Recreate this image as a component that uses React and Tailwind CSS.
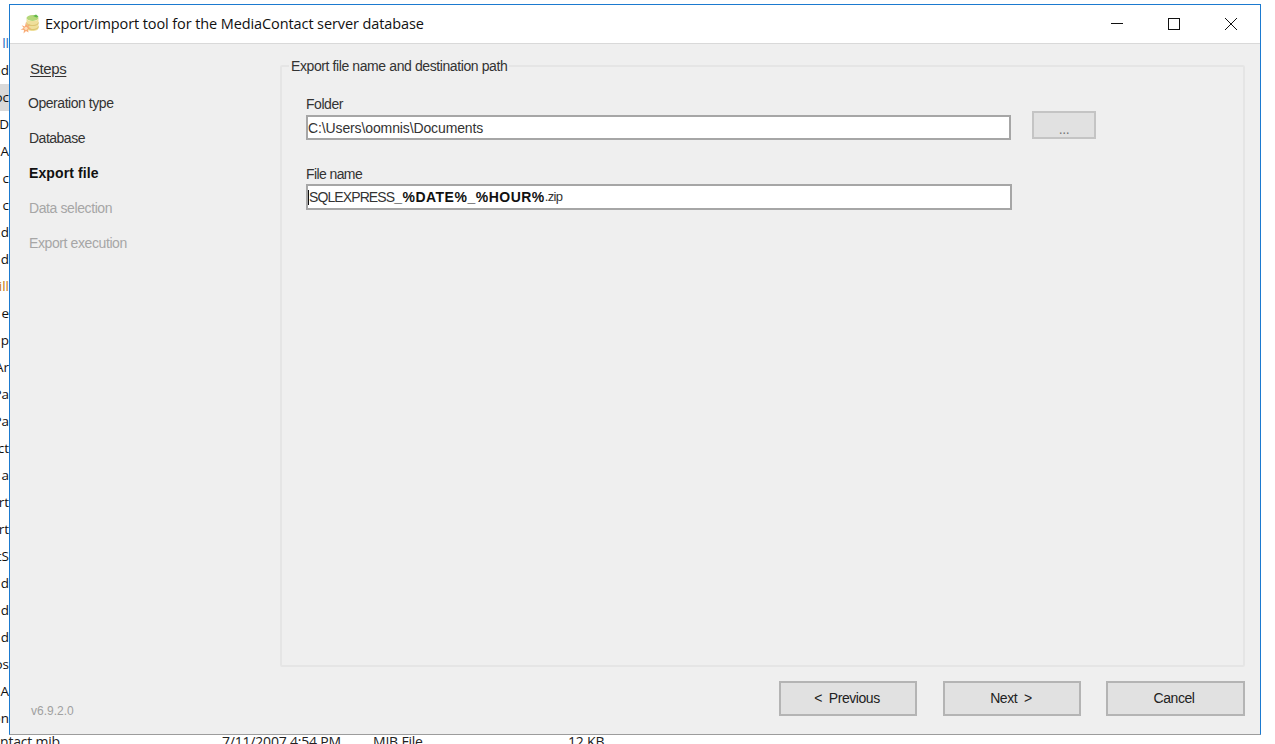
const rows = [
  ["ll", "text-[#1a6fc4]", ""],
  ["nd", "text-[#111]", ""],
  ["oc", "text-[#111]", "bg-[#d9d9d9]"],
  ["AD", "text-[#111]", ""],
  ["IA", "text-[#111]", ""],
  ["c", "text-[#111]", ""],
  ["c", "text-[#111]", ""],
  [".d", "text-[#111]", ""],
  ["d", "text-[#111]", ""],
  ["ill", "text-[#c87a10]", ""],
  ["e", "text-[#111]", ""],
  ["p", "text-[#111]", ""],
  ["Ar", "text-[#111]", ""],
  ["Pa", "text-[#111]", ""],
  ["Pa", "text-[#111]", ""],
  ["ct", "text-[#111]", ""],
  ["a", "text-[#111]", ""],
  ["rt", "text-[#111]", ""],
  ["rt", "text-[#111]", ""],
  ["tS", "text-[#111]", ""],
  ["d", "text-[#111]", ""],
  ["d", "text-[#111]", ""],
  ["d", "text-[#111]", ""],
  ["os", "text-[#111]", ""],
  ["oA", "text-[#111]", ""],
  ["on", "text-[#111]", ""],
];

function AppIcon() {
  return (
    <svg width="22" height="22" viewBox="0 0 22 22" className="shrink-0">
      <ellipse cx="13.500" cy="5" rx="6" ry="3" fill="#b5d77a" />
      <path d="M7.500 5v10c0 1.800 2.700 3 6 3s6-1.200 6-3V5c0 1.800-2.700 3-6 3s-6-1.200-6-3z" fill="#efdf9a" />
      <path d="M7.500 9.500c0 1.800 2.700 3 6 3s6-1.200 6-3M7.500 13.500c0 1.800 2.700 3 6 3s6-1.200 6-3" fill="none" stroke="#d2b65c" strokeWidth="0.8" />
      <path d="M14 3l3.500 1.500 2-1-2.500-2z" fill="#62b84a" />
      <path d="M7 9l1.100 3.500 3.200-1.300-2 2.900 3.100 1.400-3.400.4.500 3.600L7 17.900l-2.500 2.600.5-3.600-3.400-.4 3.100-1.400-2-2.900 3.200 1.300z" fill="#f8ab76" />
      <circle cx="7" cy="15.300" r="1.600" fill="#fde0bd" />
    </svg>
  );
}

function Btn({ children, className }) {
  return (
    <button className={"flex items-center justify-center bg-[#e1e1e1] border-2 border-[#b4b4b4] text-[14px] tracking-[-0.45px] text-[#222] " + className}>
      {children}
    </button>
  );
}

function Step({ children, className }) {
  return <div className={"h-[35px] flex items-center text-[14px] " + className}>{children}</div>;
}

export default function App() {
  return (
    <div className="relative w-[1275px] h-[744px] overflow-hidden bg-white font-['Liberation_Sans',sans-serif]">
      <div className="flex flex-col pt-[30px] w-[9px] text-[13.500px] font-['Open_Sans',sans-serif]">
        {rows.map((r, i) => (
          <div key={i} className={"h-[27px] leading-[27px] whitespace-nowrap flex justify-end overflow-hidden " + r[1] + " " + r[2]}>
            <span className="shrink-0">{r[0]}</span>
          </div>
        ))}
      </div>

      <div className="absolute left-0 top-[735px] h-[9px] w-[640px] text-[14px] leading-[14px] text-[#222] font-['Open_Sans',sans-serif] overflow-hidden">
        <div className="flex whitespace-nowrap tracking-[-0.2px]">
          <span className="w-[222px]">ntact.mib</span>
          <span className="w-[151px]">7/11/2007 4:54 PM</span>
          <span className="w-[195px]">MIB File</span>
          <span>12 KB</span>
        </div>
      </div>

      <div className="absolute left-[9px] top-[4px] w-[1252px] h-[731px] flex flex-col border border-[#1b7ad0] border-b-[#9c9c9c] bg-[#efefef]">
        <div className="h-[39px] shrink-0 bg-white border-b border-[#d9d9d9] flex items-center text-[#111]">
          <div className="ml-[9px] mr-[4px]"><AppIcon /></div>
          <div className="text-[14.500px] font-['Open_Sans',sans-serif] tracking-[-0.1px]">Export/import tool for the MediaContact server database</div>
          <div className="ml-auto flex h-full items-center">
            <div className="w-[57px] flex justify-center">
              <svg width="12" height="12" viewBox="0 0 12 12"><path d="M0 5.500h12" stroke="#111" strokeWidth="1" /></svg>
            </div>
            <div className="w-[57px] flex justify-center">
              <svg width="12" height="12" viewBox="0 0 12 12"><rect x="0.500" y="0.500" width="11" height="11" fill="none" stroke="#111" strokeWidth="1" /></svg>
            </div>
            <div className="w-[58px] flex justify-center">
              <svg width="12" height="12" viewBox="0 0 12 12"><path d="M0 0l12 12M12 0L0 12" stroke="#111" strokeWidth="1" /></svg>
            </div>
          </div>
        </div>

        <div className="flex-1 flex min-h-0">
          <div className="w-[270px] shrink-0 flex flex-col pl-[18px] pt-[8px] pb-[14px]">
            <div className="h-[34px] flex items-center pl-[2px] text-[15px] tracking-[-0.4px] text-[#333] underline underline-offset-2">Steps</div>
            <Step className="text-[#333] tracking-[-0.45px]">Operation type</Step>
            <Step className="text-[#333] tracking-[-0.5px] pl-[1px]">Database</Step>
            <Step className="text-[#111] font-bold pl-[1px] tracking-[0.1px]">Export file</Step>
            <Step className="text-[#a6a6a6] tracking-[-0.4px] pl-[1px]">Data selection</Step>
            <Step className="text-[#a6a6a6] tracking-[-0.4px] pl-[1px]">Export execution</Step>
            <div className="mt-auto pl-[3px] text-[12px] text-[#a0a0a0]">v6.9.2.0</div>
          </div>

          <div className="flex-1 flex flex-col pr-[15px] min-w-0">
            <fieldset className="mt-[14px] h-[609px] border-2 border-[#e5e5e5] rounded-[2px] shrink-0">
              <legend className="ml-[7px] px-[2px] text-[14px] tracking-[-0.4px] text-[#333] leading-[16px]">Export file name and destination path</legend>
              <div className="pl-[24px]">
                <div className="mt-[22px] text-[14px] tracking-[-0.45px] text-[#333] leading-[16px]">Folder</div>
                <div className="flex items-start">
                  <div className="mt-[3px] w-[705px] h-[25px] bg-white border-2 border-[#a6a6a6] flex items-center pt-[1px] text-[14px] tracking-[-0.12px] text-[#333]">C:\Users\oomnis\Documents</div>
                  <Btn className="ml-[21px] -mt-[1px] w-[64px] h-[28px] !items-end leading-[16px] text-[#777] !border-[#c4c4c4]">...</Btn>
                </div>
                <div className="mt-[26px] text-[14px] tracking-[-0.6px] text-[#333] leading-[16px]">File name</div>
                <div className="mt-[2px] w-[706px] h-[26px] bg-white border-2 border-[#a6a6a6] flex items-center text-[14px] text-[#333] whitespace-nowrap">
                  <span className="w-px h-[15px] bg-[#111] shrink-0" />
                  <span className="tracking-[-0.9px]">SQLEXPRESS</span>
                  <span className="font-bold text-[#111] tracking-[0.5px]">_%DATE%_%HOUR%</span>
                  <span className="tracking-[-0.7px] text-[13px]">.zip</span>
                </div>
              </div>
            </fieldset>
            <div className="mt-[14px] flex justify-end">
              <Btn className="w-[138px] h-[35px] mr-[26px] pr-[2px]">&lt;&nbsp; Previous</Btn>
              <Btn className="w-[138px] h-[35px] mr-[25px] pr-[2px]">Next &nbsp;&gt;</Btn>
              <Btn className="w-[139px] h-[35px] pr-[3px]">Cancel</Btn>
            </div>
          </div>
        </div>
      </div>
    </div>
  );
}
